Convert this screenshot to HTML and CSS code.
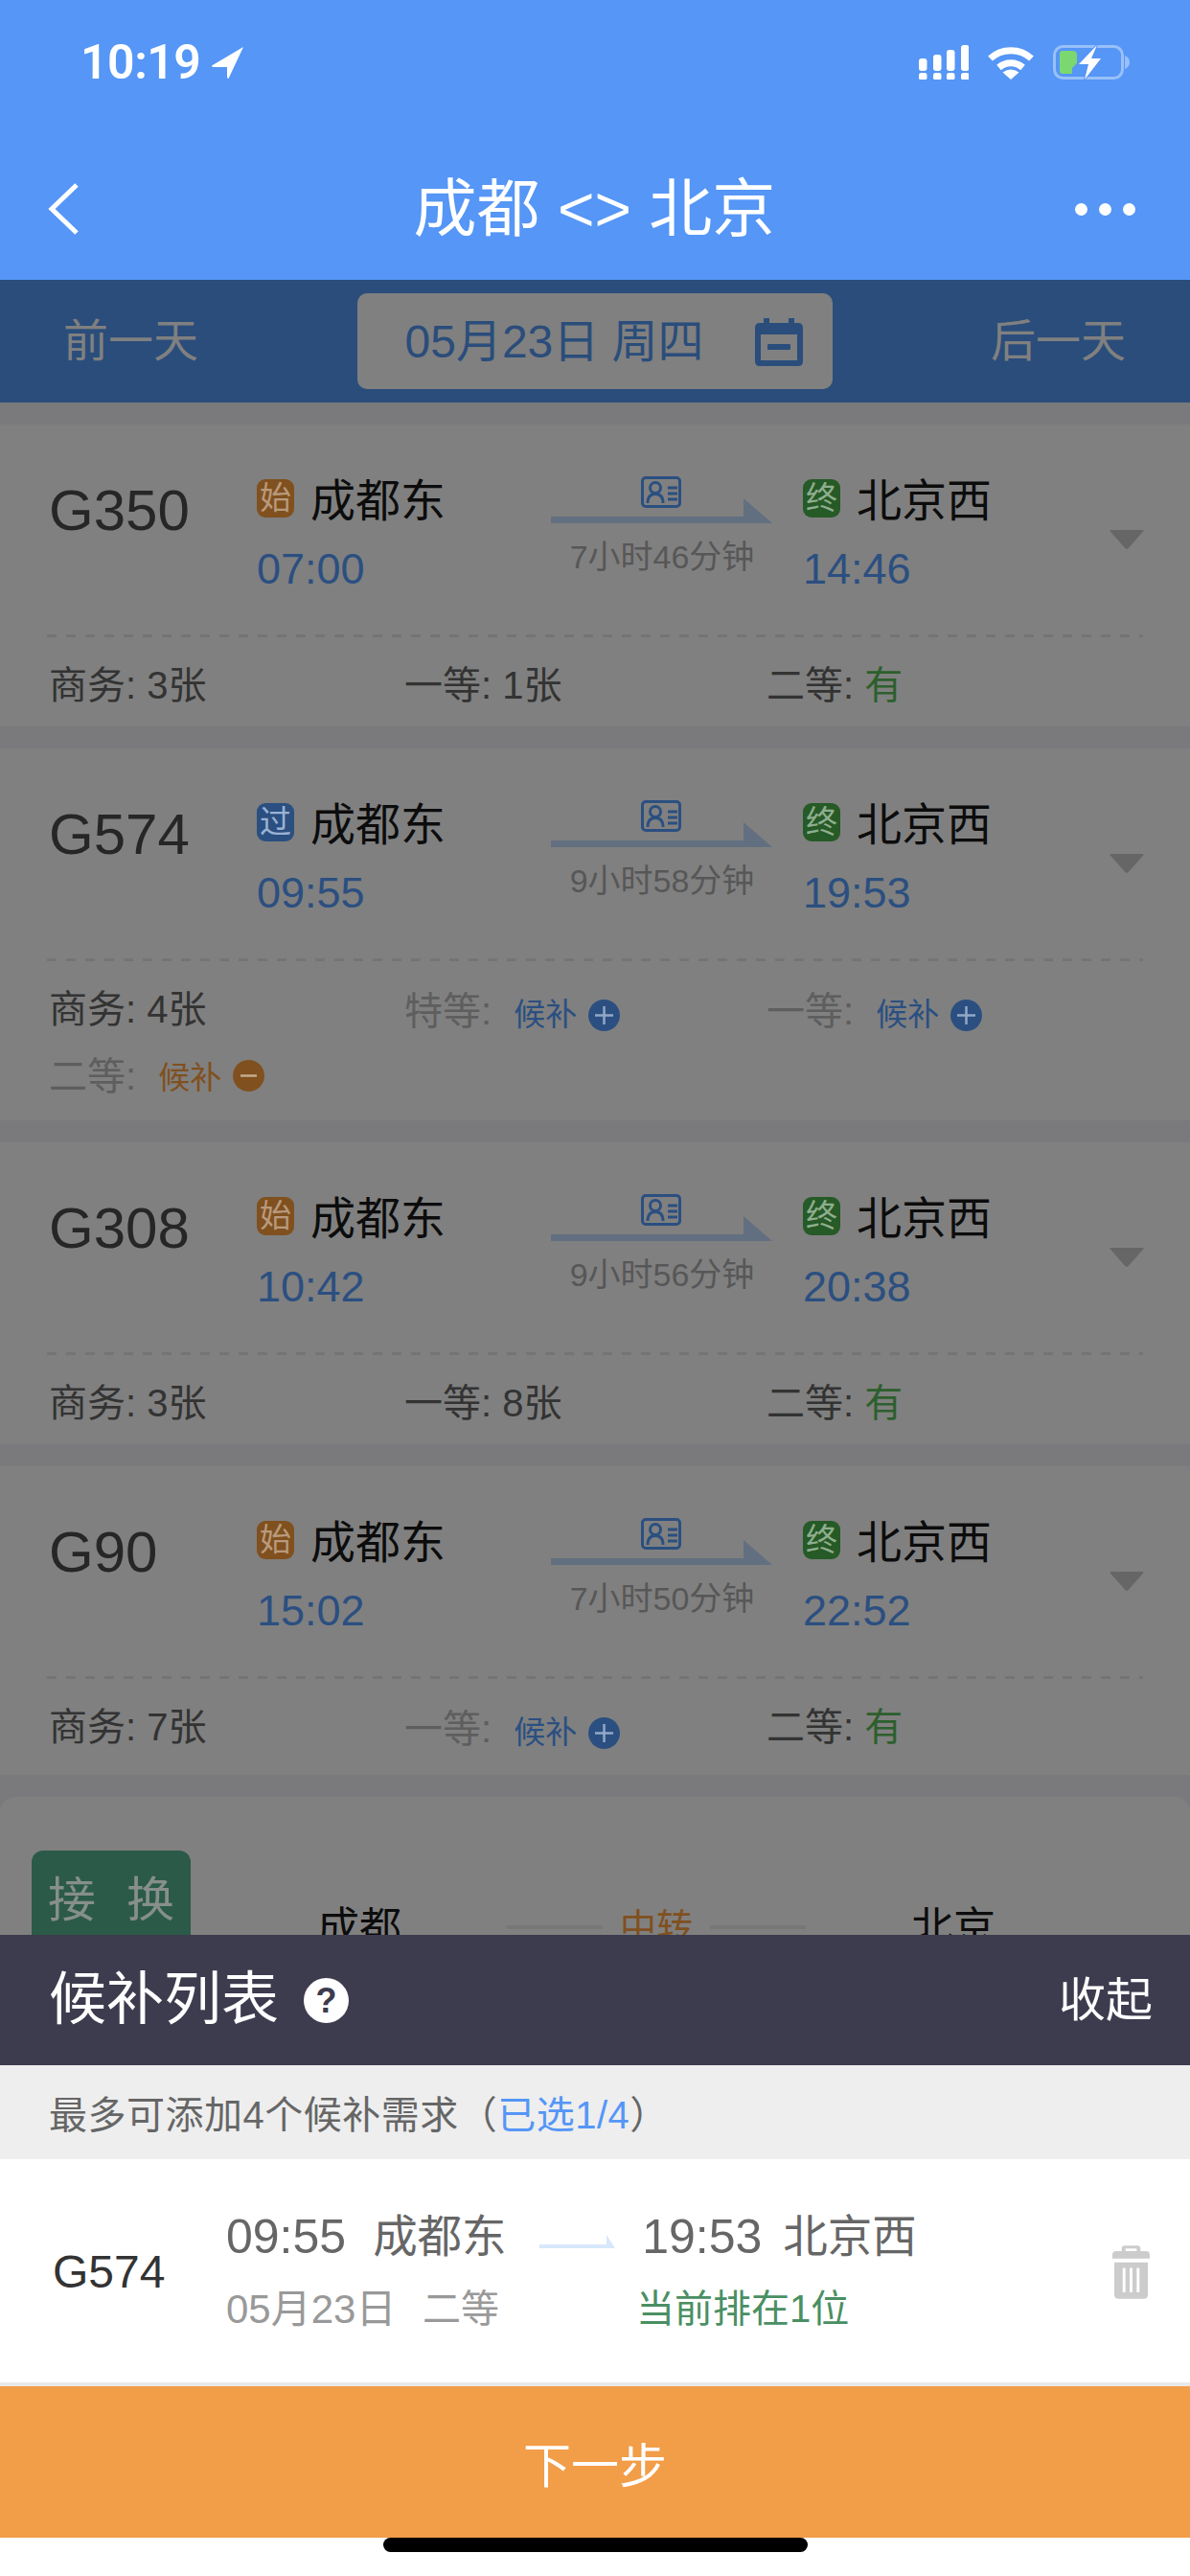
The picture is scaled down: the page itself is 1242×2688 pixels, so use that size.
FILE: index.html
```html
<!DOCTYPE html>
<html lang="zh-CN">
<head>
<meta charset="utf-8">
<title>成都 &lt;&gt; 北京</title>
<link rel="stylesheet" href="styles.css">
</head>
<body>
<svg class="defs" width="0" height="0" aria-hidden="true">
  <defs>
    <symbol id="route" viewBox="0 0 232 49">
      <path class="route-arrow" d="M0 42H201V23L231 49H0Z"/>
      <rect class="route-id" x="95.5" y="1.5" width="39" height="30" rx="3.5"/>
      <circle class="route-id" cx="109" cy="12" r="5.5"/>
      <path class="route-id" d="M101 28C101 21 104 18.500 109 18.500S117 21 117 28"/>
      <path class="route-id" d="M122 12H132M122 18H132M122 24H132"/>
    </symbol>
    <symbol id="chev" viewBox="0 0 36 20">
      <path d="M1.500 0H34.500Q36 0 35.200 1.500L19.500 19.200Q18 20.500 16.500 19.200L.8 1.500Q0 0 1.500 0Z"/>
    </symbol>
    <symbol id="plus" viewBox="0 0 33 33">
      <circle class="plus-bg" cx="16.500" cy="16.500" r="16.500"/>
      <path class="plus-mark" d="M7 16.500H26M16.500 7V26"/>
    </symbol>
    <symbol id="minus" viewBox="0 0 33 33">
      <circle class="minus-bg" cx="16.500" cy="16.500" r="16.500"/>
      <path class="minus-mark" d="M8 16.500H25"/>
    </symbol>
  </defs>
</svg>

<div class="screen">
  <header class="topbar">
    <div class="status">
      <div class="status-left">
        <span class="clock">10:19</span>
        <svg class="loc" viewBox="0 0 33 33"><path d="M33 0L0 19.500Q0 21 2 21H16V31Q16 33 17.500 33Z"/></svg>
      </div>
      <div class="status-right">
        <svg class="signal" viewBox="0 0 52 36">
          <rect x="0" y="14" width="8.500" height="13" rx="3"/><rect x="15" y="10" width="8.500" height="17" rx="3"/><rect x="29" y="5" width="8.500" height="22" rx="3"/><rect x="44" y="0" width="8.500" height="27" rx="3"/>
          <rect x="0" y="29" width="8.500" height="7.500" rx="2.500"/><rect x="15" y="29" width="8.500" height="7.500" rx="2.500"/><rect x="29" y="29" width="8.500" height="7.500" rx="2.500"/><rect x="44" y="29" width="8.500" height="7.500" rx="2.500"/>
        </svg>
        <svg class="wifi" viewBox="0 0 50 36">
          <path class="wifi-arc" d="M3.500 14A32 32 0 0 1 46.500 14"/>
          <path class="wifi-arc" d="M12.500 23.500A19 19 0 0 1 37.500 23.500"/>
          <path class="wifi-dot" d="M25 36L16.500 28.500Q25 22.500 33.500 28.500Z"/>
        </svg>
        <svg class="battery" viewBox="0 0 81 36">
          <rect class="batt-shell" x="1.500" y="1.500" width="71" height="33" rx="9"/>
          <path class="batt-nub" d="M75 11Q80 13 80 18T75 25Z"/>
          <path class="batt-fill" d="M10 6H20Q25 6 25 10V19L20 24V30H10Q7 30 7 27V9Q7 6 10 6Z"/>
          <path class="batt-bolt" d="M46 0L27 20H37L33 36L50 14H40Z"/>
        </svg>
      </div>
    </div>
    <nav class="navbar">
      <svg class="back" viewBox="0 0 32 54"><path d="M30 2L4 27L30 52"/></svg>
      <h1 class="nav-title">成都 &lt;&gt; 北京</h1>
      <div class="more"><i></i><i></i><i></i></div>
    </nav>
  </header>

  <div class="datebar">
    <span class="day-link">前一天</span>
    <div class="date-pill">
      <span class="date-text">05月23日 周四</span>
      <svg class="cal" viewBox="0 0 50 50">
        <path d="M9 0H15V5H35V0H41V5H45Q50 5 50 10V45Q50 50 45 50H5Q0 50 0 45V10Q0 5 5 5H9ZM6 17V44H44V17Z"/>
        <rect x="13" y="27" width="24" height="6" rx="1"/>
      </svg>
    </div>
    <span class="day-link">后一天</span>
  </div>

  <main class="list">
    <article class="card">
      <div class="main">
        <div class="train">G350</div>
        <div class="stop">
          <div class="stop-name"><b class="tag tag-start">始</b>成都东</div>
          <div class="time">07:00</div>
        </div>
        <div class="route"><svg class="route-svg"><use href="#route"/></svg><div class="dur">7小时46分钟</div></div>
        <div class="stop">
          <div class="stop-name"><b class="tag tag-end">终</b>北京西</div>
          <div class="time">14:46</div>
        </div>
        <svg class="chev"><use href="#chev"/></svg>
      </div>
      <div class="dash"></div>
      <div class="seats">
        <div class="seat">商务: 3张</div>
        <div class="seat">一等: 1张</div>
        <div class="seat">二等: <span class="has">有</span></div>
      </div>
    </article>

    <article class="card">
      <div class="main">
        <div class="train">G574</div>
        <div class="stop">
          <div class="stop-name"><b class="tag tag-pass">过</b>成都东</div>
          <div class="time">09:55</div>
        </div>
        <div class="route"><svg class="route-svg"><use href="#route"/></svg><div class="dur">9小时58分钟</div></div>
        <div class="stop">
          <div class="stop-name"><b class="tag tag-end">终</b>北京西</div>
          <div class="time">19:53</div>
        </div>
        <svg class="chev"><use href="#chev"/></svg>
      </div>
      <div class="dash"></div>
      <div class="seats seats-two">
        <div class="seat">商务: 4张</div>
        <div class="seat seat-wait">特等: <span class="wait">候补</span><svg class="wait-ico"><use href="#plus"/></svg></div>
        <div class="seat seat-wait">一等: <span class="wait">候补</span><svg class="wait-ico"><use href="#plus"/></svg></div>
        <div class="seat seat-wait seat-added">二等: <span class="wait wait-added">候补</span><svg class="wait-ico"><use href="#minus"/></svg></div>
      </div>
    </article>

    <article class="card">
      <div class="main">
        <div class="train">G308</div>
        <div class="stop">
          <div class="stop-name"><b class="tag tag-start">始</b>成都东</div>
          <div class="time">10:42</div>
        </div>
        <div class="route"><svg class="route-svg"><use href="#route"/></svg><div class="dur">9小时56分钟</div></div>
        <div class="stop">
          <div class="stop-name"><b class="tag tag-end">终</b>北京西</div>
          <div class="time">20:38</div>
        </div>
        <svg class="chev"><use href="#chev"/></svg>
      </div>
      <div class="dash"></div>
      <div class="seats">
        <div class="seat">商务: 3张</div>
        <div class="seat">一等: 8张</div>
        <div class="seat">二等: <span class="has">有</span></div>
      </div>
    </article>

    <article class="card">
      <div class="main">
        <div class="train">G90</div>
        <div class="stop">
          <div class="stop-name"><b class="tag tag-start">始</b>成都东</div>
          <div class="time">15:02</div>
        </div>
        <div class="route"><svg class="route-svg"><use href="#route"/></svg><div class="dur">7小时50分钟</div></div>
        <div class="stop">
          <div class="stop-name"><b class="tag tag-end">终</b>北京西</div>
          <div class="time">22:52</div>
        </div>
        <svg class="chev"><use href="#chev"/></svg>
      </div>
      <div class="dash"></div>
      <div class="seats seats-tall">
        <div class="seat">商务: 7张</div>
        <div class="seat seat-wait">一等: <span class="wait">候补</span><svg class="wait-ico"><use href="#plus"/></svg></div>
        <div class="seat">二等: <span class="has">有</span></div>
      </div>
    </article>

    <article class="card card-transfer">
      <div class="transfer-tag"><span>接</span><span>换</span></div>
      <div class="transfer-city">成都</div>
      <div class="transfer-mid"><i></i><span>中转</span><i></i></div>
      <div class="transfer-city transfer-city-end">北京</div>
    </article>
  </main>

  <section class="sheet">
    <div class="sheet-head">
      <div class="sheet-title">候补列表<span class="help">?</span></div>
      <div class="sheet-fold">收起</div>
    </div>
    <div class="sheet-note">最多可添加4个候补需求（<span class="note-count">已选1/4</span>）</div>
    <div class="item">
      <div class="item-train">G574</div>
      <div class="item-info">
        <div class="item-row">
          <span class="item-time">09:55</span><span class="item-stop">成都东</span>
          <svg class="item-arrow" viewBox="0 0 79 14"><path d="M0 10H70V0L79 14H0Z"/></svg>
          <span class="item-time">19:53</span><span class="item-stop item-stop-end">北京西</span>
        </div>
        <div class="item-row item-row-sub">
          <span class="item-date">05月23日</span><span class="item-class">二等</span><span class="item-rank">当前排在1位</span>
        </div>
      </div>
      <svg class="trash" viewBox="0 0 40 57">
        <path d="M13 0H27Q30 0 30 3V6H36Q40 6 40 10V14H0V10Q0 6 4 6H10V3Q10 0 13 0ZM14 3V6H26V3Z"/>
        <path d="M2 18H38V52Q38 57 33 57H7Q2 57 2 52ZM11 24V50H14V24ZM18.500 24V50H21.500V24ZM26 24V50H29V24Z" fill-rule="evenodd"/>
      </svg>
    </div>
    <button class="next" type="button">下一步</button>
    <div class="home-area"><div class="home-bar"></div></div>
  </section>
</div>
</body>
</html>
```

FILE: styles.css
```css
* { box-sizing: border-box; }
html, body { margin: 0; padding: 0; }
body {
  width: 1242px;
  height: 2688px;
  overflow: hidden;
  font-family: "Liberation Sans", "Noto Sans CJK SC", sans-serif;
  background: #fff;
}
.defs { position: absolute; }
.screen {
  width: 1242px;
  height: 2688px;
  display: flex;
  flex-direction: column;
  overflow: hidden;
}

/* top bar */
.topbar { height: 292px; background: #5596f6; color: #fff; flex: none; }
.status {
  height: 132px;
  padding: 46px 62px 0 84px;
  display: flex;
  justify-content: space-between;
  align-items: flex-start;
}
.status-left { display: flex; align-items: center; gap: 12px; height: 38px; }
.clock { font-family: Roboto, sans-serif; font-weight: 600; font-size: 50px; line-height: 38px; letter-spacing: -0.5px; }
.loc { width: 33px; height: 33px; fill: #fff; }
.status-right { display: flex; align-items: flex-end; height: 37px; }
.signal { width: 52px; height: 36px; fill: #fff; }
.wifi { width: 50px; height: 36px; margin-left: 19px; }
.wifi-arc { fill: none; stroke: #fff; stroke-width: 7; }
.wifi-dot { fill: #fff; }
.battery { width: 81px; height: 36px; margin-left: 19px; }
.batt-shell { fill: none; stroke: rgba(255,255,255,.4); stroke-width: 3; }
.batt-nub { fill: rgba(255,255,255,.4); }
.batt-fill { fill: #7bd770; }
.batt-bolt { fill: #fff; stroke: #5596f6; stroke-width: 2; paint-order: stroke; }

.navbar {
  height: 160px;
  padding: 0 57px 0 50px;
  display: grid;
  grid-template-columns: 1fr auto 1fr;
  align-items: start;
}
.back { width: 32px; height: 54px; margin-top: 59px; fill: none; stroke: #fff; stroke-width: 5; }
.nav-title { margin: 50px 0 0 6px; font-size: 66px; font-weight: 400; line-height: 72px; }
.more { display: flex; gap: 12px; margin-top: 80px; justify-self: end; }
.more i { width: 13px; height: 13px; border-radius: 50%; background: #fff; }

/* date bar */
.datebar {
  height: 128px;
  flex: none;
  background: #2a4d7b;
  display: flex;
  align-items: center;
  justify-content: space-between;
  padding: 0 67px 0 66px;
}
.day-link { font-size: 47px; line-height: 56px; color: #808080; }
.date-pill {
  width: 496px;
  height: 100px;
  border-radius: 10px;
  background: #808080;
  display: flex;
  align-items: center;
  padding: 2px 31px 0 50px;
  justify-content: space-between;
  color: #2a4d7b;
}
.date-text { font-size: 48px; line-height: 56px; }
.cal { width: 50px; height: 50px; fill: #2a4d7b; }

/* list */
.list {
  flex: 1;
  min-height: 0;
  overflow: hidden;
  background: #7a7a7c;
  padding-top: 23px;
  display: flex;
  flex-direction: column;
  gap: 23px;
}
.card { background: #808080; flex: none; }
.main {
  height: 219px;
  padding-left: 51px;
  display: grid;
  grid-template-columns: 217px 307px 263px 320px 36px;
}
.train { font-size: 60px; line-height: 70px; color: #262626; padding-top: 55px; }
.stop { padding-top: 57px; }
.stop-name { display: flex; align-items: flex-start; height: 40px; font-size: 47px; color: #0c0c0c; line-height: 46px; }
.tag {
  width: 39px;
  height: 40px;
  margin-right: 17px;
  border-radius: 9px;
  font-weight: 400;
  font-size: 33px;
  line-height: 40px;
  text-align: center;
  flex: none;
}
.tag-start { background: #80501f; color: #b89a7c; }
.tag-end { background: #265a26; color: #8fae8f; }
.tag-pass { background: #2b4f80; color: #9ab2d2; }
.time { margin-top: 32px; font-size: 45px; line-height: 44px; color: #2b4f80; }
.route { padding-top: 54px; }
.route-svg { display: block; width: 232px; height: 49px; }
.route-arrow { fill: #626f80; }
.route-id { fill: none; stroke: #2b4f80; stroke-width: 3; }
.dur { width: 232px; margin-top: 18px; text-align: center; font-size: 34px; line-height: 34px; color: #575757; }
.chev { width: 36px; height: 20px; margin-top: 110px; fill: #666; }
.dash {
  height: 3px;
  margin: 0 49px;
  background: repeating-linear-gradient(90deg, #747474 0 10px, transparent 10px 20px);
}
.seats {
  padding: 16px 0 8px 51px;
  display: grid;
  grid-template-columns: 371px 378px 1fr;
  grid-auto-rows: 69px;
}
.seats-two { padding-bottom: 12px; }
.seats-tall { padding-bottom: 15px; }
.seat { display: flex; align-items: center; font-size: 40px; color: #333; white-space: pre; padding-bottom: 8px; }
.has { color: #2d5f2d; }
.seat-wait { color: #5e5e5e; padding-bottom: 4px; }
.seat-added { padding-bottom: 6px; }
.wait { font-size: 33px; color: #2b4f80; margin-left: 12px; padding-top: 8px; }
.wait-added { color: #80501f; padding-top: 4px; }
.wait-ico { width: 33px; height: 33px; margin: 16px 0 0 12px; flex: none; }
.seat-added .wait-ico { margin-top: 6px; }
.plus-bg { fill: #2b4f80; }
.plus-mark { fill: none; stroke: #93a8c6; stroke-width: 2.5; }
.minus-bg { fill: #80501f; }
.minus-mark { fill: none; stroke: #c4ab8c; stroke-width: 2.5; }

/* transfer card clipped by the sheet */
.card-transfer {
  height: 300px;
  border-radius: 16px 16px 0 0;
  padding: 56px 0 0 33px;
  display: flex;
  align-items: flex-start;
}
.transfer-tag {
  width: 166px;
  height: 150px;
  border-radius: 12px;
  background: #2b5a49;
  color: #868f8b;
  font-size: 50px;
  padding: 24px 17px 0;
  display: flex;
  justify-content: space-between;
  line-height: 56px;
  flex: none;
}
.transfer-city { font-size: 44px; line-height: 52px; color: #0c0c0c; margin: 55px 0 0 132px; width: 90px; white-space: nowrap; }
.transfer-city-end { margin-left: 110px; }
.transfer-mid {
  width: 312px;
  margin: 57px 0 0 108px;
  display: flex;
  align-items: center;
  gap: 18px;
  font-size: 38px;
  line-height: 46px;
  color: #80501f;
}
.transfer-mid i { flex: 1; height: 4px; background: #777; }

/* bottom sheet */
.sheet { flex: none; height: 669px; display: flex; flex-direction: column; background: #fff; }
.sheet-head {
  height: 136px;
  background: #3d3b4e;
  color: #fff;
  display: flex;
  align-items: center;
  justify-content: space-between;
  padding: 0 39px 0 51px;
}
.sheet-title { display: flex; align-items: center; font-size: 60px; line-height: 70px; }
.help {
  width: 47px;
  height: 47px;
  margin-left: 26px;
  border-radius: 50%;
  background: #fff;
  color: #3d3b4e;
  font-size: 36px;
  font-weight: 700;
  line-height: 47px;
  text-align: center;
}
.sheet-fold { font-size: 49px; line-height: 56px; }
.sheet-note {
  height: 98px;
  background: #eeeeee;
  padding-left: 51px;
  display: flex;
  align-items: center;
  font-size: 40px;
  letter-spacing: .5px;
  color: #666;
}
.note-count { color: #5596f6; }
.item {
  height: 233px;
  padding: 0 42px 0 55px;
  display: flex;
  align-items: center;
}
.item-train { width: 181px; font-size: 48px; color: #333; line-height: 56px; flex: none; padding-top: 2px; }
.item-info { flex: 1; display: flex; flex-direction: column; gap: 22px; }
.item-row { display: flex; align-items: center; height: 50px; color: #666; }
.item-row-sub { font-size: 40px; }
.item-time { font-size: 50px; line-height: 50px; }
.item-stop { font-size: 46.5px; line-height: 50px; margin-left: 28px; }
.item-stop-end { margin-left: 22px; }
.item-arrow { width: 79px; height: 14px; margin: 10px 28.5px 0 34px; fill: #d8e8fb; }
.item-date { color: #999; width: 205px; font-size: 42px; }
.item-class { color: #999; width: 223px; }
.item-rank { color: #4a8f63; }
.trash { width: 39px; height: 58px; fill: #ccc; flex: none; margin-top: 2px; }
.next {
  height: 162px;
  margin: 0;
  padding: 0;
  border: 0;
  border-top: 4px solid #e8e8e8;
  background: #f29d48;
  background-clip: padding-box;
  color: #fff;
  font: inherit;
  font-size: 50px;
  flex: none;
}
.home-area { flex: 1; background: #fff; display: flex; justify-content: center; align-items: flex-start; }
.home-bar { width: 443px; height: 15px; border-radius: 8px; background: #000; }
```
